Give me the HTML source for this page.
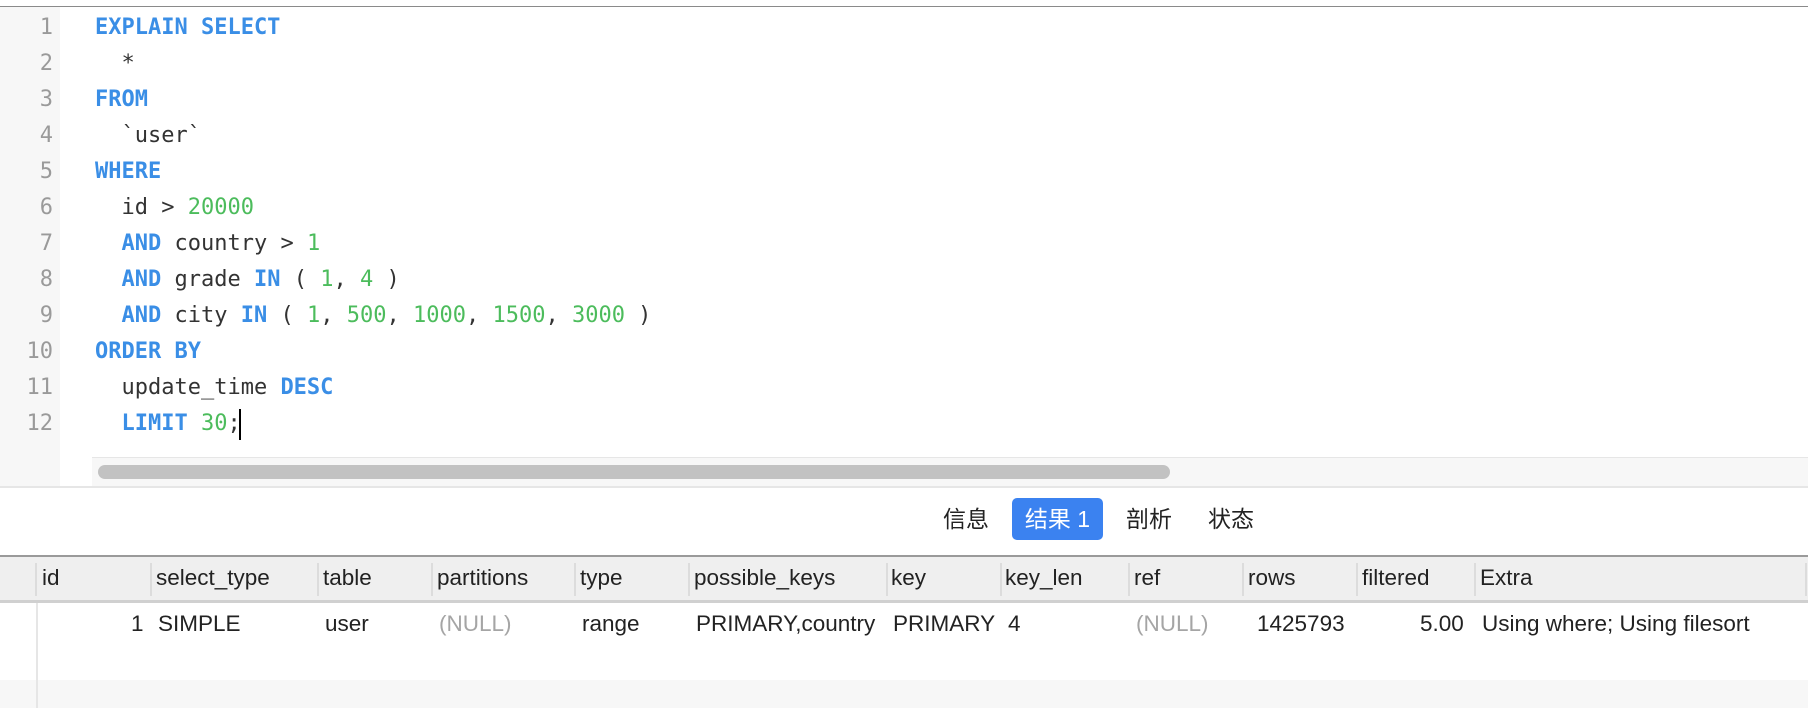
<!DOCTYPE html>
<html><head><meta charset="utf-8"><style>
*{margin:0;padding:0;box-sizing:border-box}
body{width:1808px;height:708px;background:#fff;position:relative;overflow:hidden;font-family:"Liberation Sans","Noto Sans CJK SC",sans-serif}
.top{position:absolute;left:0;top:6px;width:1808px;height:1px;background:#8a8a8a}
.gut{position:absolute;left:0;top:7px;width:60px;height:480px;background:#f7f7f7}
.lns{position:absolute;left:0;top:10px;width:53px;text-align:right;font:22px "DejaVu Sans Mono","Liberation Mono",monospace;color:#9a9a9a;white-space:pre;line-height:36px}
.code{position:absolute;left:95px;top:10px;font:22px "DejaVu Sans Mono","Liberation Mono",monospace;color:#333;white-space:pre;line-height:36px}
.k{color:#3a8ee6;font-weight:bold}.n{color:#4cbc5c}
.track{position:absolute;left:92px;top:457px;width:1716px;height:29px;background:#f7f7f7;border-top:1px solid #e6e6e6}
.thumb{position:absolute;left:98px;top:465px;width:1072px;height:14px;border-radius:7px;background:#c2c2c2}
.sep{position:absolute;left:0;top:486px;width:1808px;height:2px;background:#e6e6e6}
.tab{position:absolute;top:498px;height:42px;line-height:42px;font-size:23px;color:#222}
.act{background:#3b82f0;color:#fff;border-radius:5px;width:91px;text-align:center}
.hd{position:absolute;left:0;top:555px;width:1808px;height:48px;background:#efefef;border-top:2px solid #9a9a9a;border-bottom:3px solid #d0d0d0}
.c{position:absolute;font-size:22.5px;color:#222;white-space:nowrap}
.vs{position:absolute;top:563px;width:2px;height:33px;background:#dcdcdc}
.g{color:#a5a5a5}
</style></head><body>
<div class="top"></div>
<div class="gut"></div>
<div class="lns">1
2
3
4
5
6
7
8
9
10
11
12</div>
<div class="code"><span class="k">EXPLAIN SELECT</span>
  *
<span class="k">FROM</span>
  `user`
<span class="k">WHERE</span>
  id &gt; <span class="n">20000</span>
  <span class="k">AND</span> country &gt; <span class="n">1</span>
  <span class="k">AND</span> grade <span class="k">IN</span> ( <span class="n">1</span>, <span class="n">4</span> )
  <span class="k">AND</span> city <span class="k">IN</span> ( <span class="n">1</span>, <span class="n">500</span>, <span class="n">1000</span>, <span class="n">1500</span>, <span class="n">3000</span> )
<span class="k">ORDER BY</span>
  update_time <span class="k">DESC</span>
  <span class="k">LIMIT</span> <span class="n">30</span>;</div>
<div style="position:absolute;left:239px;top:409px;width:2px;height:31px;background:#000"></div>
<div class="track"></div><div class="thumb"></div><div class="sep"></div>
<div class="tab" style="left:943px">信息</div>
<div class="tab act" style="left:1012px">结果 1</div>
<div class="tab" style="left:1126px">剖析</div>
<div class="tab" style="left:1208px">状态</div>
<div class="hd"></div>
<div style="position:absolute;left:0;top:680px;width:1808px;height:28px;background:#f7f7f7"></div>
<div style="position:absolute;left:36px;top:603px;width:2px;height:105px;background:#e6e6e6"></div>
<div class="vs" style="left:35px"></div><div class="vs" style="left:150px"></div><div class="vs" style="left:317px"></div><div class="vs" style="left:431px"></div><div class="vs" style="left:574px"></div><div class="vs" style="left:688px"></div><div class="vs" style="left:886px"></div><div class="vs" style="left:1000px"></div><div class="vs" style="left:1128px"></div><div class="vs" style="left:1242px"></div><div class="vs" style="left:1356px"></div><div class="vs" style="left:1474px"></div><div class="vs" style="left:1805px"></div>
<div class="c" style="left:42px;top:565px">id</div>
<div class="c" style="left:156px;top:565px">select_type</div>
<div class="c" style="left:323px;top:565px">table</div>
<div class="c" style="left:437px;top:565px">partitions</div>
<div class="c" style="left:580px;top:565px">type</div>
<div class="c" style="left:694px;top:565px">possible_keys</div>
<div class="c" style="left:891px;top:565px">key</div>
<div class="c" style="left:1005px;top:565px">key_len</div>
<div class="c" style="left:1134px;top:565px">ref</div>
<div class="c" style="left:1248px;top:565px">rows</div>
<div class="c" style="left:1362px;top:565px">filtered</div>
<div class="c" style="left:1480px;top:565px">Extra</div>
<div class="c" style="left:131px;top:611px">1</div>
<div class="c" style="left:158px;top:611px">SIMPLE</div>
<div class="c" style="left:325px;top:611px">user</div>
<div class="c g" style="left:439px;top:611px">(NULL)</div>
<div class="c" style="left:582px;top:611px">range</div>
<div class="c" style="left:696px;top:611px">PRIMARY,country</div>
<div class="c" style="left:893px;top:611px">PRIMARY</div>
<div class="c" style="left:1008px;top:611px">4</div>
<div class="c g" style="left:1136px;top:611px">(NULL)</div>
<div class="c" style="left:1257px;top:611px">1425793</div>
<div class="c" style="left:1420px;top:611px">5.00</div>
<div class="c" style="left:1482px;top:611px">Using where; Using filesort</div>
</body></html>
